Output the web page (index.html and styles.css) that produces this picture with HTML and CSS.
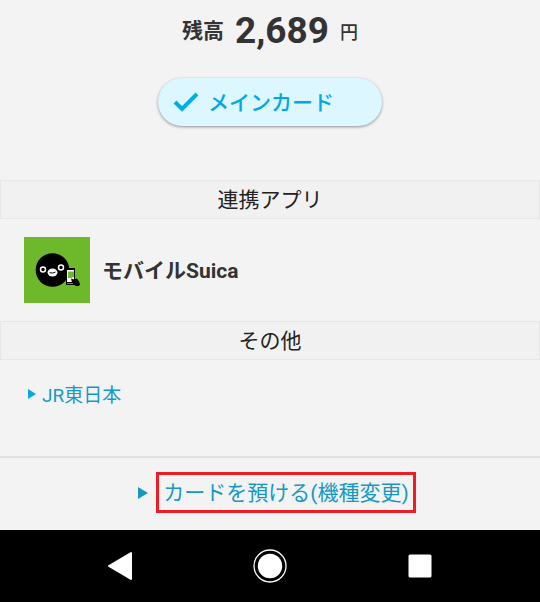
FILE: index.html
```html
<!DOCTYPE html>
<html lang="ja">
<head>
  <meta charset="UTF-8">
  <meta name="viewport" content="width=device-width, initial-scale=1.0">
  <title>モバイルSuica</title>
  <link rel="stylesheet" href="styles.css">
</head>
<body>
  <main>
    <div class="balance">
      <span class="balance-label">残高</span>
      <span class="balance-value">2,689</span>
      <span class="balance-unit">円</span>
    </div>

    <button type="button" class="main-card">
      <svg width="26" height="20" viewBox="0 0 26 20" aria-hidden="true">
        <path d="M2 10L9 17L24 2" fill="none" stroke="#00aee3" stroke-width="4"/>
      </svg>
      <span class="main-card-text">メインカード</span>
    </button>

    <h2 class="section-title">連携アプリ</h2>
    <div class="app">
      <svg class="app-icon" viewBox="0 0 66 66" aria-hidden="true">
        <rect width="66" height="66" fill="#6eb92b"/>
        <circle cx="28.5" cy="33" r="16.8" fill="#000"/>
        <circle cx="19" cy="32.5" r="2.5" fill="#000" stroke="#fff" stroke-width="1.5"/>
        <circle cx="37" cy="30.5" r="2.5" fill="#000" stroke="#fff" stroke-width="1.5"/>
        <ellipse cx="28.5" cy="35.5" rx="5" ry="4" fill="#fff"/>
        <path d="M25.5 35.8Q29 36.6 31.5 35" fill="none" stroke="#000" stroke-width="1"/>
        <rect x="42" y="31" width="9" height="17" fill="#000"/>
        <path d="M43 33H50V45H43Z" fill="#fff"/>
        <path d="M44 34.5H50V40L47 41H44Z" fill="#6eb92b"/>
        <path d="M47 41.5L50 42.5L53 41.5Q56 45 56 48Q54 50 51 48.5L48 45.5Z" fill="#000"/>
        <path d="M43.5 46.5H49" stroke="#fff" stroke-width="1" stroke-dasharray="1 1"/>
      </svg>
      <span class="app-name">モバイルSuica</span>
    </div>

    <h2 class="section-title">その他</h2>
    <div class="links">
      <a href="#" class="arrow-link">JR東日本</a>
    </div>
  </main>

  <footer>
    <a href="#" class="deposit"><span class="deposit-text">カードを預ける(機種変更)</span></a>
  </footer>

  <nav>
    <button type="button" aria-label="戻る">
      <svg width="34" height="34" viewBox="0 0 34 34">
        <path d="M6 17L28 4V30Z" fill="#fff" stroke="#fff" stroke-width="2" stroke-linejoin="round"/>
      </svg>
    </button>
    <button type="button" aria-label="ホーム">
      <svg width="34" height="34" viewBox="0 0 34 34">
        <circle cx="17" cy="17" r="16" fill="none" stroke="#fff" stroke-width="1.3"/>
        <circle cx="17" cy="17" r="12.2" fill="#fff"/>
      </svg>
    </button>
    <button type="button" aria-label="履歴">
      <svg width="34" height="34" viewBox="0 0 34 34">
        <rect x="5.5" y="5.5" width="23" height="23" rx="1.5" fill="#fff"/>
      </svg>
    </button>
  </nav>
</body>
</html>
```

FILE: styles.css
```css
* {
  box-sizing: border-box;
}
body {
  margin: 0;
  min-height: 100vh;
  display: flex;
  flex-direction: column;
  background-color: #f3f3f3;
  color: #333;
  font-family: Roboto, "Noto Sans CJK JP", sans-serif;
  font-size: 21px;
}
main {
  flex: 1;
}
.balance {
  display: flex;
  justify-content: center;
  align-items: center;
  gap: 11px;
  padding-top: 8px;
  line-height: 42px;
  font-weight: bold;
}
.balance-value {
  font-size: 37px;
}
.balance-unit {
  padding-top: 4px;
  font-size: 18px;
  font-weight: 500;
}
.main-card {
  display: flex;
  align-items: center;
  gap: 9px;
  width: 224px;
  height: 48px;
  margin: 24px auto 54px;
  padding: 0 15px;
  border: none;
  border-radius: 24px;
  background-color: #dcf7ff;
  box-shadow: 0 1px 3px rgba(0, 0, 0, 0.4);
  color: #00a9e0;
  font-family: inherit;
  font-size: 21px;
  font-weight: 500;
}
.main-card-text,
.app-name {
  padding-bottom: 3px;
}
.section-title {
  margin: 0;
  padding-top: 1px;
  border: 1px solid #e6e6e6;
  background-color: #f1f1f1;
  color: #222;
  font-size: 21px;
  font-weight: normal;
  line-height: 36px;
  text-align: center;
}
.app {
  display: flex;
  align-items: center;
  gap: 12px;
  padding: 18px 24px;
  font-weight: bold;
}
.app-icon {
  width: 66px;
  height: 66px;
}
.links {
  padding: 21px 28px;
  font-size: 19px;
  line-height: 30px;
}
a {
  color: #1599c4;
  text-decoration: none;
}
.arrow-link::before,
.deposit::before {
  content: "";
  display: inline-block;
  border-left: 8px solid #00a9e0;
  border-top: 5px solid transparent;
  border-bottom: 5px solid transparent;
  margin-right: 6px;
  vertical-align: 3px;
}
footer {
  border-top: 2px solid #e0e0e0;
  padding: 14px 0 17px;
}
.deposit {
  display: flex;
  justify-content: center;
  align-items: center;
  padding-left: 14px;
}
.deposit::before {
  border-left: 10px solid #1599c4;
  border-top-width: 6px;
  border-bottom-width: 6px;
  margin-right: 8px;
}
.deposit-text {
  border: 3px solid #ee1c25;
  padding: 2px 4px 0;
  line-height: 33px;
}
nav {
  display: flex;
  justify-content: center;
  gap: 116px;
  height: 72px;
  background-color: #000;
}
nav button {
  display: flex;
  align-items: center;
  padding: 0;
  border: none;
  background: none;
}
```
